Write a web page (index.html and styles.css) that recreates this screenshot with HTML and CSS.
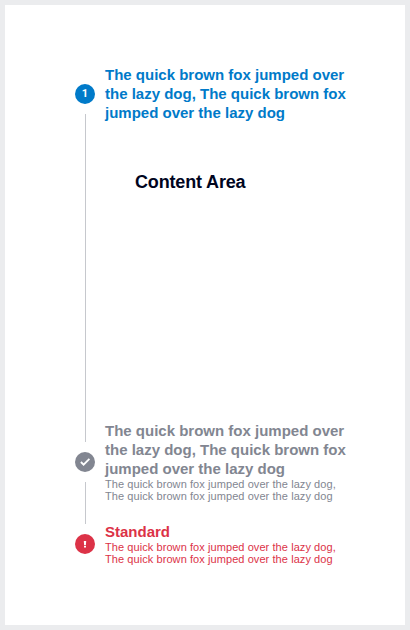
FILE: index.html
```html
<!DOCTYPE html>
<html lang="en">
<head>
<meta charset="utf-8">
<title>Vertical steps</title>
<link rel="stylesheet" href="styles.css">
</head>
<body>
<main class="panel">
  <ol class="steps">
    <li class="step step-active">
      <div class="rail">
        <span class="badge"><svg viewBox="0 0 20 20" class="disc"><circle cx="10" cy="10" r="10"/></svg><span class="number">1</span></span>
        <span class="line"></span>
      </div>
      <div class="body">
        <h2 class="title">The quick brown fox jumped over<br>the lazy dog, The quick brown fox<br>jumped over the lazy dog</h2>
        <div class="content">Content Area</div>
      </div>
    </li>
    <li class="step step-done">
      <div class="rail">
        <span class="badge"><svg viewBox="0 0 20 20" class="disc"><circle cx="10" cy="10" r="10"/><path class="check" d="M5.9 10 8.6 12.7 14.4 6.9"/></svg></span>
        <span class="line"></span>
      </div>
      <div class="body">
        <h2 class="title">The quick brown fox jumped over<br>the lazy dog, The quick brown fox<br>jumped over the lazy dog</h2>
        <p class="note">The quick brown fox jumped over the lazy dog,<br>The quick brown fox jumped over the lazy dog</p>
      </div>
    </li>
    <li class="step step-error">
      <div class="rail">
        <span class="badge"><svg viewBox="0 0 20 20" class="disc"><circle cx="10" cy="10" r="10"/><path class="mark" d="M8.8 6.9h2.4l-.3 4.1H9.1zM9 11.8h2v1.7H9z"/></svg></span>
      </div>
      <div class="body">
        <h2 class="title">Standard</h2>
        <p class="note">The quick brown fox jumped over the lazy dog,<br>The quick brown fox jumped over the lazy dog</p>
      </div>
    </li>
  </ol>
</main>
</body>
</html>
```

FILE: styles.css
```css
* { box-sizing: border-box; }
body {
  margin: 0;
  background: #ebecee;
  font-family: "Liberation Sans", Arial, sans-serif;
}
.panel {
  height: 620px;
  margin: 5px;
  padding: 60px 60px 0 70px;
  background: #fff;
}
.steps { margin: 0; padding: 0; list-style: none; }
.step { display: flex; gap: 10px; }
.step-active { height: 356px; color: #007ac9; }
.step-done { height: 101px; color: #828691; }
.step-error { color: #dc3247; }
.rail {
  display: flex;
  flex-direction: column;
  align-items: center;
  width: 20px;
  padding-top: 19px;
}
.step-done .rail { padding-top: 31px; }
.step-error .rail { padding-top: 12px; }
.badge { display: grid; width: 20px; height: 20px; place-items: center; flex: none; }
.disc, .number { grid-area: 1 / 1; }
.disc { width: 20px; height: 20px; fill: currentColor; }
.number { color: #fff; font-family: Roboto, sans-serif; font-size: 11px; font-weight: 700; line-height: 20px; }
.check { fill: none; stroke: #fff; stroke-width: 1.8; }
.mark { fill: #fff; }
.line { width: 1px; flex: 1; margin-top: 10px; background: #c6c8cd; }
.step-active .line { flex: 0 0 328px; }
.step-done .line { flex: 0 0 42px; }
.body { white-space: nowrap; }
.title { margin: 0; font-size: 15px; line-height: 19px; font-weight: 700; }
.note { margin: 0; font-size: 11px; line-height: 12px; letter-spacing: 0.075px; }
.content { margin: 50px 0 0 30px; color: #00051e; font-size: 18px; line-height: 20px; font-weight: 700; letter-spacing: -0.16px; }
```
